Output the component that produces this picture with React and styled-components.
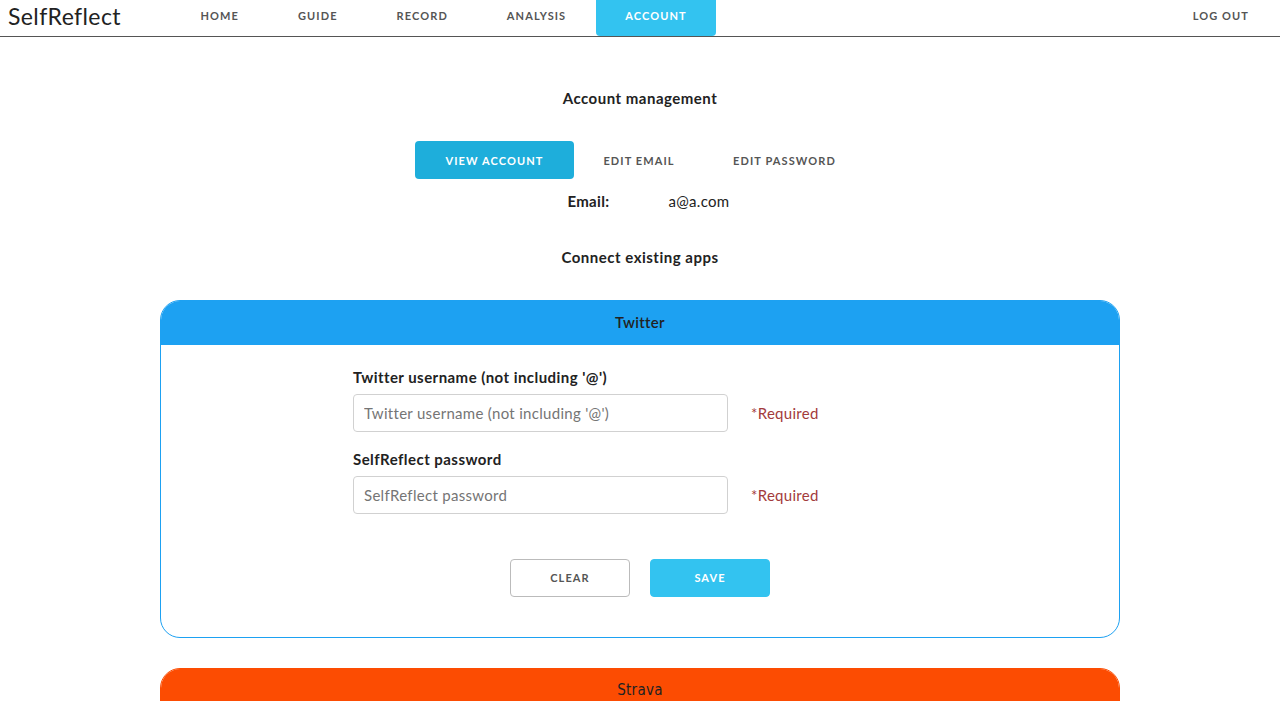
import React from "react";
import styled, { createGlobalStyle } from "styled-components";

const Global = createGlobalStyle`
  html, body { margin: 0; padding: 0; background: #fff; }
  body {
    font-family: Lato, "Open Sans", sans-serif;
    font-size: 15px;
    line-height: 1.6;
    letter-spacing: 0.3px;
    color: #222;
  }
  * { box-sizing: border-box; }
`;

const NavBar = styled.nav`
  display: flex;
  align-items: stretch;
  height: 37px;
  border-bottom: 1px solid #555;
  padding-left: 8px;
`;

const Logo = styled.div`
  font-size: 23px;
  font-weight: 400;
  line-height: 33px;
  color: #222;
  width: 163px;
  letter-spacing: 0.4px;
`;

const NavList = styled.div`
  display: flex;
  flex: 1;
`;

const NavItem = styled.a`
  display: flex;
  align-items: center;
  justify-content: center;
  height: 36px;
  padding: 0 29.5px 4px;
  font-size: 11px;
  font-weight: 700;
  letter-spacing: 1.1px;
  text-transform: uppercase;
  white-space: nowrap;
  color: ${(p) => (p.$active ? "#fff" : "#555")};
  background: ${(p) => (p.$active ? "#33c3f0" : "transparent")};
  border-radius: 0 0 4px 4px;
  cursor: pointer;
  ${(p) => p.$right && "margin-left: auto; padding-right: 31px;"}
`;

const Main = styled.main`
  display: flex;
  flex-direction: column;
  align-items: center;
  padding-top: 49px;
`;

const Heading = styled.h2`
  margin: 0;
  font-size: 15px;
  font-weight: 700;
  line-height: 24px;
  letter-spacing: 0.5px;
  text-align: center;
`;

const Tabs = styled.div`
  display: flex;
  margin-top: 31px;
`;

const Tab = styled.button`
  height: 38px;
  padding: 0;
  border: none;
  border-radius: 4px;
  font-family: inherit;
  font-size: 11px;
  font-weight: 700;
  letter-spacing: 1.1px;
  text-transform: uppercase;
  white-space: nowrap;
  color: ${(p) => (p.$active ? "#fff" : "#555")};
  background: ${(p) => (p.$active ? "#1eaedb" : "transparent")};
  width: ${(p) => p.$w}px;
  cursor: pointer;
`;

const InfoRow = styled.div`
  display: grid;
  grid-template-columns: 101px 64px;
  margin: 10px 0 0 20px;
  line-height: 24px;
`;

const InfoLabel = styled.span`
  font-weight: 700;
`;

const SubHeading = styled(Heading)`
  margin-top: 32px;
`;

const Card = styled.section`
  width: 960px;
  margin-top: 31px;
  border: 1px solid ${(p) => p.$color};
  border-radius: 20px;
  overflow: hidden;
`;

const CardHeader = styled.div`
  height: 44px;
  display: flex;
  align-items: center;
  justify-content: center;
  padding-bottom: 2px;
  background: ${(p) => p.$color};
  font-size: 15px;
  font-weight: ${(p) => p.$weight || 600};
  color: #222;
  font-family: ${(p) => p.$font || "inherit"};
`;

const CardBody = styled.div`
  padding: 20px 0 40px;
  display: flex;
  flex-direction: column;
  align-items: center;
`;

const Form = styled.form`
  display: grid;
  grid-template-columns: 375px 176px;
  column-gap: 23px;
  align-items: center;
`;

const Label = styled.label`
  grid-column: 1 / 3;
  display: block;
  font-weight: 700;
  letter-spacing: 0.45px;
  line-height: 24px;
  margin-bottom: 5px;
`;

const Input = styled.input`
  height: 38px;
  width: 375px;
  padding: 6px 10px;
  border: 1px solid #d1d1d1;
  border-radius: 4px;
  font-family: inherit;
  font-size: 15px;
  letter-spacing: 0.3px;
  color: #222;
  margin-bottom: 15px;
  &::placeholder { color: #757575; }
`;

const Required = styled.span`
  color: #a33b3b;
  margin-bottom: 15px;
  line-height: 38px;
`;

const Actions = styled.div`
  display: flex;
  gap: 20px;
  margin-top: 30px;
`;

const Button = styled.button`
  width: 120px;
  height: 38px;
  border-radius: 4px;
  border: 1px solid ${(p) => (p.$primary ? "#33c3f0" : "#bbb")};
  background: ${(p) => (p.$primary ? "#33c3f0" : "transparent")};
  color: ${(p) => (p.$primary ? "#fff" : "#555")};
  font-family: inherit;
  font-size: 11px;
  font-weight: 700;
  letter-spacing: 1.1px;
  text-transform: uppercase;
  padding: 0 0 2px;
  cursor: pointer;
`;

const StravaCard = styled(Card)`
  margin-top: 30px;
  margin-bottom: 40px;
`;

const Spacer = styled.div`
  height: 200px;
`;

function AppCard({ title, color, font, weight, children, as }) {
  const Wrap = as || Card;
  return (
    <Wrap $color={color}>
      <CardHeader $color={color} $font={font} $weight={weight}>{title}</CardHeader>
      {children}
    </Wrap>
  );
}

export default function App() {
  return (
    <>
      <Global />
      <NavBar>
        <Logo>SelfReflect</Logo>
        <NavList>
          <NavItem>Home</NavItem>
          <NavItem>Guide</NavItem>
          <NavItem>Record</NavItem>
          <NavItem>Analysis</NavItem>
          <NavItem $active>Account</NavItem>
          <NavItem $right>Log out</NavItem>
        </NavList>
      </NavBar>
      <Main>
        <Heading>Account management</Heading>
        <Tabs>
          <Tab $active $w={159}>View account</Tab>
          <Tab $w={130}>Edit email</Tab>
          <Tab $w={161}>Edit password</Tab>
        </Tabs>
        <InfoRow>
          <InfoLabel>Email:</InfoLabel>
          <span>a@a.com</span>
        </InfoRow>
        <SubHeading>Connect existing apps</SubHeading>
        <AppCard title="Twitter" color="#1da1f2">
          <CardBody>
            <Form onSubmit={(e) => e.preventDefault()}>
              <Label>Twitter username (not including '@')</Label>
              <Input placeholder="Twitter username (not including '@')" />
              <Required>*Required</Required>
              <Label>SelfReflect password</Label>
              <Input type="password" placeholder="SelfReflect password" />
              <Required>*Required</Required>
            </Form>
            <Actions>
              <Button type="button">Clear</Button>
              <Button type="button" $primary>Save</Button>
            </Actions>
          </CardBody>
        </AppCard>
        <AppCard
          title="Strava"
          color="#fc4c02"
          weight={400}
          font={'"DejaVu Sans Condensed", "Liberation Sans", sans-serif'}
          as={StravaCard}
        >
          <Spacer />
        </AppCard>
      </Main>
    </>
  );
}
